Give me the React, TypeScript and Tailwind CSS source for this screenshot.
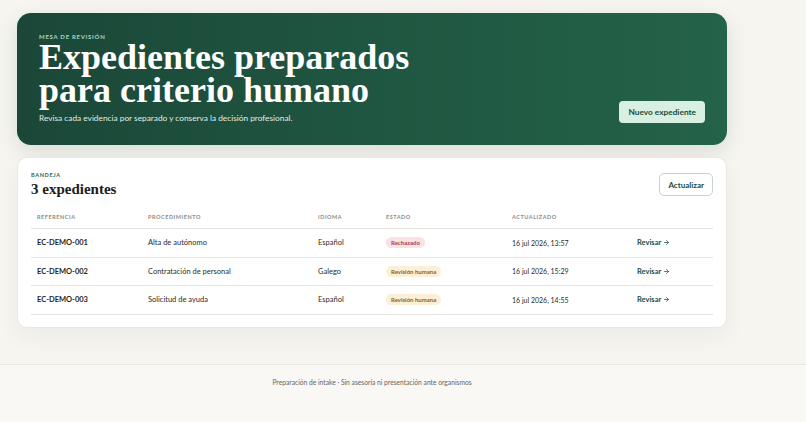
import { ArrowRight } from "lucide-react";

type Row = {
  ref: string;
  procedure: string;
  language: string;
  status: "rejected" | "review";
  updated: string;
};

const rows: Row[] = [
  { ref: "EC-DEMO-001", procedure: "Alta de autónomo", language: "Español", status: "rejected", updated: "16 jul 2026, 13:57" },
  { ref: "EC-DEMO-002", procedure: "Contratación de personal", language: "Galego", status: "review", updated: "16 jul 2026, 15:29" },
  { ref: "EC-DEMO-003", procedure: "Solicitud de ayuda", language: "Español", status: "review", updated: "16 jul 2026, 14:55" },
];

const cols = "grid grid-cols-[111px_170px_68px_126px_125px_1fr]";

function StatusBadge({ status }: { status: Row["status"] }) {
  if (status === "rejected") {
    return (
      <span className="inline-flex items-center rounded-full bg-[#fbe2e2] px-[5px] h-[11px] text-[6px] font-bold text-[#a6414b]">
        Rechazado
      </span>
    );
  }
  return (
    <span className="inline-flex items-center rounded-full bg-[#fcefd6] px-[5px] h-[11px] text-[6px] font-bold text-[#8a6422]">
      Revisión humana
    </span>
  );
}

export default function App() {
  return (
    <div className="min-h-[422px] bg-[#f6f5f0] font-['Lato','Open_Sans',sans-serif] flex flex-col">
      <main className="pl-[17px] pt-[13px] pb-[36px] w-[727px]">
        {/* hero */}
        <section className="rounded-[14px] bg-gradient-to-r from-[#1b4738] via-[#1f5641] to-[#246249] px-[22px] pt-[20px] pb-[22px] flex items-end justify-between shadow-[0_6px_20px_rgba(20,50,35,0.12)]">
          <div>
            <p className="text-[6px] leading-[8px] font-bold tracking-[0.12em] text-[#a9d6bf]">MESA DE REVISIÓN</p>
            <h1 className="font-['Liberation_Serif',serif] font-bold text-white text-[36px] leading-[33px]">
              Expedientes preparados
              <br />
              para criterio humano
            </h1>
            <p className="mt-[6px] text-[8.3px] leading-[10px] text-[#e1ece6]">
              Revisa cada evidencia por separado y conserva la decisión profesional.
            </p>
          </div>
          <button className="h-[22px] px-[9px] rounded-[4px] bg-[#d7f0e1] text-[8.3px] font-bold text-[#1d4a38]">
            Nuevo expediente
          </button>
        </section>

        {/* bandeja */}
        <section className="mt-[12px] rounded-[10px] bg-white border border-[#e9e7e0] px-[13px] pt-[14px] pb-[12px] shadow-[0_8px_24px_rgba(40,40,20,0.05)]">
          <div className="flex items-center justify-between">
            <div>
              <p className="text-[5.5px] leading-[7px] font-bold tracking-[0.12em] text-[#2d6a4d]">BANDEJA</p>
              <h2 className="mt-[2px] font-['Liberation_Serif',serif] font-bold text-[15px] leading-[16px] text-[#1d1d1b]">
                3 expedientes
              </h2>
            </div>
            <button className="h-[23px] px-[8px] rounded-[5px] border border-[#c7d3cc] bg-white text-[8px] font-bold text-[#1d4a38]">
              Actualizar
            </button>
          </div>

          <div className="mt-[10px]">
            <div className={`${cols} h-[22px] items-center border-b border-[#e6e4de] text-[5.5px] font-bold tracking-[0.1em] text-[#8c8c86]`}>
              <span className="pl-[6px]">REFERENCIA</span>
              <span className="pl-[6px]">PROCEDIMIENTO</span>
              <span className="pl-[6px]">IDIOMA</span>
              <span className="pl-[6px]">ESTADO</span>
              <span className="pl-[6px]">ACTUALIZADO</span>
              <span />
            </div>
            {rows.map((r) => (
              <div key={r.ref} className={`${cols} h-[28.5px] items-center border-b border-[#e6e4de] text-[7.5px] text-[#2b2b29]`}>
                <span className="pl-[6px] font-bold text-[#1f1f1d]">{r.ref}</span>
                <span className="pl-[6px]">{r.procedure}</span>
                <span className="pl-[6px]">{r.language}</span>
                <span className="pl-[6px]">
                  <StatusBadge status={r.status} />
                </span>
                <span className="pl-[6px] text-[7px]">{r.updated}</span>
                <span className="pl-[6px] flex items-center gap-[2px] font-bold text-[#1d4d3a]">
                  Revisar <ArrowRight size={7} strokeWidth={2.5} />
                </span>
              </div>
            ))}
          </div>
        </section>
      </main>

      <footer className="flex-1 border-t border-[#e9e7e1] bg-[#f9f8f4]">
        <div className="w-[727px] pl-[17px] pt-[12px] text-center text-[6.7px] text-[#66665f]">
          Preparación de intake · Sin asesoría ni presentación ante organismos
        </div>
      </footer>
    </div>
  );
}
